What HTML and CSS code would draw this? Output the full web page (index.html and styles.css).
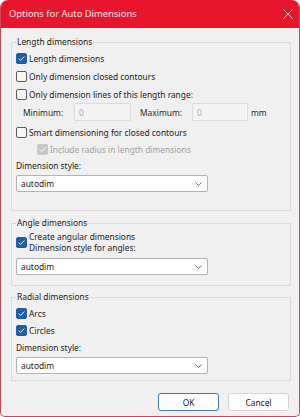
FILE: index.html
```html
<!DOCTYPE html>
<html>
<head>
<meta charset="utf-8">
<link rel="stylesheet" href="styles.css">
</head>
<body>
<div class="window">
  <div class="titlebar">
    <span class="title">Options for Auto Dimensions</span>
    <svg class="close" width="10" height="10" viewBox="0 0 10 10"><path d="M0.5 0.5 L9.5 9.5 M9.5 0.5 L0.5 9.5" stroke="#fbd0d4" stroke-width="1" fill="none"/></svg>
  </div>
  <div class="content">
    <fieldset class="group g1">
      <legend>Length dimensions</legend>
      <div class="row r18"><span class="box checked"><svg width="11" height="11" viewBox="0 0 11 11"><path d="M2.8 5.6 L4.6 7.4 L8.3 3.6" stroke="#fff" stroke-width="1" fill="none"/></svg></span><span class="txt">Length dimensions</span></div>
      <div class="row r18"><span class="box"></span><span class="txt">Only dimension closed contours</span></div>
      <div class="row r18"><span class="box"></span><span class="txt">Only dimension lines of this length range:</span></div>
      <div class="range">
        <span class="rlbl min">Minimum:</span>
        <span class="input in1">0</span>
        <span class="rlbl max">Maximum:</span>
        <span class="input in2">0</span>
        <span class="rlbl unit">mm</span>
      </div>
      <div class="row smart"><span class="box"></span><span class="txt">Smart dimensioning for closed contours</span></div>
      <div class="row sub disabled"><span class="box dis"><svg width="11" height="11" viewBox="0 0 11 11"><path d="M2.8 5.6 L4.6 7.4 L8.3 3.6" stroke="#fff" stroke-width="1" fill="none"/></svg></span><span class="txt">Include radius in length dimensions</span></div>
      <div class="label l1">Dimension style:</div>
      <div class="select"><span>autodim</span><svg class="chev" width="7" height="4" viewBox="0 0 7 4"><path d="M0.5 0.5 L3.5 3.5 L6.5 0.5" stroke="#707070" stroke-width="1" fill="none"/></svg></div>
    </fieldset>

    <fieldset class="group g2">
      <legend>Angle dimensions</legend>
      <div class="row two"><span class="box checked"><svg width="11" height="11" viewBox="0 0 11 11"><path d="M2.8 5.6 L4.6 7.4 L8.3 3.6" stroke="#fff" stroke-width="1" fill="none"/></svg></span><span class="txt">Create angular dimensions<br>Dimension style for angles:</span></div>
      <div class="select s2"><span>autodim</span><svg class="chev" width="7" height="4" viewBox="0 0 7 4"><path d="M0.5 0.5 L3.5 3.5 L6.5 0.5" stroke="#707070" stroke-width="1" fill="none"/></svg></div>
    </fieldset>

    <fieldset class="group g3">
      <legend>Radial dimensions</legend>
      <div class="row r17 first"><span class="box checked"><svg width="11" height="11" viewBox="0 0 11 11"><path d="M2.8 5.6 L4.6 7.4 L8.3 3.6" stroke="#fff" stroke-width="1" fill="none"/></svg></span><span class="txt">Arcs</span></div>
      <div class="row r17"><span class="box checked"><svg width="11" height="11" viewBox="0 0 11 11"><path d="M2.8 5.6 L4.6 7.4 L8.3 3.6" stroke="#fff" stroke-width="1" fill="none"/></svg></span><span class="txt">Circles</span></div>
      <div class="label">Dimension style:</div>
      <div class="select"><span>autodim</span><svg class="chev" width="7" height="4" viewBox="0 0 7 4"><path d="M0.5 0.5 L3.5 3.5 L6.5 0.5" stroke="#707070" stroke-width="1" fill="none"/></svg></div>
    </fieldset>

    <div class="buttons">
      <button class="btn default">OK</button>
      <button class="btn">Cancel</button>
    </div>
  </div>
</div>
</body>
</html>
```

FILE: styles.css
```css
html, body {
  margin: 0;
  padding: 0;
  background: #ffffff;
}
body {
  font-family: "Noto Sans", "Open Sans", sans-serif;
  font-size: 8.4px;
  color: #1b1b1b;
}
.window {
  width: 300px;
  height: 417px;
  box-sizing: border-box;
  border: 1px solid #c9485a;
  border-top: none;
  border-radius: 8px 8px 5px 5px;
  background: #f0f0f0;
  overflow: hidden;
  display: flex;
  flex-direction: column;
}
.titlebar {
  height: 27px;
  flex: none;
  background: #e7162c;
  margin: 0 -1px;
  display: flex;
  align-items: center;
  justify-content: space-between;
  padding: 0 7px 1px 9px;
  border-radius: 8px 8px 0 0;
}
.title {
  color: #fde8ea;
  font-size: 9.4px;
}
.close {
  display: block;
  margin-top: 1px;
}
.content {
  flex: 1;
  display: flex;
  flex-direction: column;
}
.group {
  margin: 0 0 0 10px;
  width: 280px;
  box-sizing: border-box;
  border: 1px solid #dadada;
  padding: 0 4px;
  min-width: 0;
}
.group legend {
  padding: 0 1px;
  height: 14px;
  line-height: 14px;
}
.g1 { margin-top: 7px; padding-bottom: 18px; }
.g2 { margin-top: 5px; padding-bottom: 10px; }
.g3 { margin-top: 4px; padding-bottom: 6px; }

.row {
  display: flex;
  align-items: center;
}
.r18 { height: 18px; }
.r17 { height: 17px; }
.first { margin-top: 1px; }
.smart { height: 17px; margin-top: 3px; }
.sub { height: 16px; padding-left: 21px; }
.disabled .txt { color: #a3a3a3; }
.two {
  margin-top: 1px;
  line-height: 11px;
}
.txt { margin-left: 2px; }
.box {
  width: 11px;
  height: 11px;
  box-sizing: border-box;
  border: 1px solid #5b5b5b;
  border-radius: 2px;
  background: #f7f7f7;
  flex: none;
  position: relative;
}
.box svg {
  position: absolute;
  left: -1px;
  top: -1px;
}
.box.checked {
  background: #1d5fae;
  border-color: #1d5fae;
}
.box.dis {
  background: #c8c8c8;
  border-color: #c8c8c8;
}
.range {
  height: 18px;
  display: flex;
  align-items: center;
}
.rlbl { color: #2a2a2a; }
.min { margin-left: 7px; width: 51px; }
.max { margin-left: 9px; width: 52px; }
.unit { margin-left: 3px; }
.input {
  height: 18px;
  box-sizing: border-box;
  border: 1px solid #dcdcdc;
  background: #f4f4f4;
  color: #a8a8a8;
  padding-left: 4px;
  display: flex;
  align-items: center;
}
.in1 { width: 57px; }
.in2 { width: 56px; }
.label {
  height: 18px;
  line-height: 18px;
}
.select {
  width: 192px;
  height: 17px;
  box-sizing: border-box;
  border: 1px solid #b3b3b3;
  border-radius: 2px;
  background: #ffffff;
  display: flex;
  align-items: center;
  justify-content: space-between;
  padding: 0 5px 0 4px;
}
.s2 { margin-top: 5px; }
.chev { display: block; }
.buttons {
  margin-top: 12px;
  display: flex;
  justify-content: flex-end;
  gap: 9px;
  padding-right: 10px;
}
.btn {
  width: 61px;
  height: 18px;
  box-sizing: border-box;
  border: 1px solid #d3d3d3;
  border-radius: 3px;
  background: #fdfdfd;
  font-family: "Noto Sans", "Open Sans", sans-serif;
  font-size: 8.4px;
  color: #1b1b1b;
  padding: 0;
}
.btn.default {
  border: 1.5px solid #3a78b8;
}
```
